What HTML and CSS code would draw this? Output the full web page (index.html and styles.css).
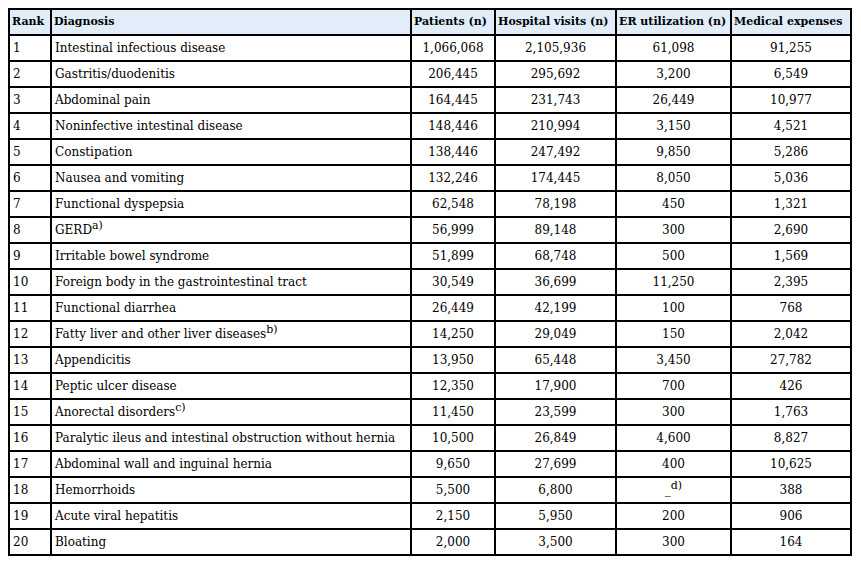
FILE: index.html
```html
<!DOCTYPE html>
<html>
<head>
<meta charset="utf-8">
<link rel="stylesheet" href="styles.css">
</head>
<body>
<table class="data">
<colgroup>
<col class="c-rank"><col class="c-diag"><col class="c-pat"><col class="c-hosp"><col class="c-er"><col class="c-med">
</colgroup>
<thead>
<tr><th>Rank</th><th>Diagnosis</th><th>Patients (n)</th><th>Hospital visits (n)</th><th>ER utilization (n)</th><th>Medical expenses</th></tr>
</thead>
<tbody>
<tr><td>1</td><td>Intestinal infectious disease</td><td class="num">1,066,068</td><td class="num">2,105,936</td><td class="num">61,098</td><td class="num">91,255</td></tr>
<tr><td>2</td><td>Gastritis/duodenitis</td><td class="num">206,445</td><td class="num">295,692</td><td class="num">3,200</td><td class="num">6,549</td></tr>
<tr><td>3</td><td>Abdominal pain</td><td class="num">164,445</td><td class="num">231,743</td><td class="num">26,449</td><td class="num">10,977</td></tr>
<tr><td>4</td><td>Noninfective intestinal disease</td><td class="num">148,446</td><td class="num">210,994</td><td class="num">3,150</td><td class="num">4,521</td></tr>
<tr><td>5</td><td>Constipation</td><td class="num">138,446</td><td class="num">247,492</td><td class="num">9,850</td><td class="num">5,286</td></tr>
<tr><td>6</td><td>Nausea and vomiting</td><td class="num">132,246</td><td class="num">174,445</td><td class="num">8,050</td><td class="num">5,036</td></tr>
<tr><td>7</td><td>Functional dyspepsia</td><td class="num">62,548</td><td class="num">78,198</td><td class="num">450</td><td class="num">1,321</td></tr>
<tr><td>8</td><td>GERD<sup>a)</sup></td><td class="num">56,999</td><td class="num">89,148</td><td class="num">300</td><td class="num">2,690</td></tr>
<tr><td>9</td><td>Irritable bowel syndrome</td><td class="num">51,899</td><td class="num">68,748</td><td class="num">500</td><td class="num">1,569</td></tr>
<tr><td>10</td><td>Foreign body in the gastrointestinal tract</td><td class="num">30,549</td><td class="num">36,699</td><td class="num">11,250</td><td class="num">2,395</td></tr>
<tr><td>11</td><td>Functional diarrhea</td><td class="num">26,449</td><td class="num">42,199</td><td class="num">100</td><td class="num">768</td></tr>
<tr><td>12</td><td>Fatty liver and other liver diseases<sup>b)</sup></td><td class="num">14,250</td><td class="num">29,049</td><td class="num">150</td><td class="num">2,042</td></tr>
<tr><td>13</td><td>Appendicitis</td><td class="num">13,950</td><td class="num">65,448</td><td class="num">3,450</td><td class="num">27,782</td></tr>
<tr><td>14</td><td>Peptic ulcer disease</td><td class="num">12,350</td><td class="num">17,900</td><td class="num">700</td><td class="num">426</td></tr>
<tr><td>15</td><td>Anorectal disorders<sup>c)</sup></td><td class="num">11,450</td><td class="num">23,599</td><td class="num">300</td><td class="num">1,763</td></tr>
<tr><td>16</td><td>Paralytic ileus and intestinal obstruction without hernia</td><td class="num">10,500</td><td class="num">26,849</td><td class="num">4,600</td><td class="num">8,827</td></tr>
<tr><td>17</td><td>Abdominal wall and inguinal hernia</td><td class="num">9,650</td><td class="num">27,699</td><td class="num">400</td><td class="num">10,625</td></tr>
<tr><td>18</td><td>Hemorrhoids</td><td class="num">5,500</td><td class="num">6,800</td><td class="num">_<sup>d)</sup></td><td class="num">388</td></tr>
<tr><td>19</td><td>Acute viral hepatitis</td><td class="num">2,150</td><td class="num">5,950</td><td class="num">200</td><td class="num">906</td></tr>
<tr><td>20</td><td>Bloating</td><td class="num">2,000</td><td class="num">3,500</td><td class="num">300</td><td class="num">164</td></tr>
</tbody>
</table>
</body>
</html>
```

FILE: styles.css
```css
html, body {
  margin: 0;
  padding: 0;
  background: #ffffff;
}
body {
  padding: 8px;
  font-family: "DejaVu Serif", "Liberation Serif", serif;
  font-size: 12px;
  color: #000;
}
.data {
  border-collapse: separate;
  border-spacing: 0;
  border: 1px solid #000;
  table-layout: fixed;
  width: 842px;
}
.c-rank { width: 42px; }
.c-diag { width: 360px; }
.c-pat { width: 84px; }
.c-hosp { width: 121px; }
.c-er { width: 115px; }
.c-med { width: 120px; }
.data th, .data td {
  border: 1px solid #000;
  padding: 5px 3px;
  line-height: 14px;
  text-align: left;
  vertical-align: middle;
  white-space: nowrap;
  overflow: hidden;
}
.data th {
  background: #e1eefa;
  font-weight: bold;
  font-size: 11px;
  padding: 5px 2px;
}
.data td.num {
  text-align: center;
}
.data sup {
  font-size: 11px;
  line-height: 0;
  vertical-align: 5px;
}
```
